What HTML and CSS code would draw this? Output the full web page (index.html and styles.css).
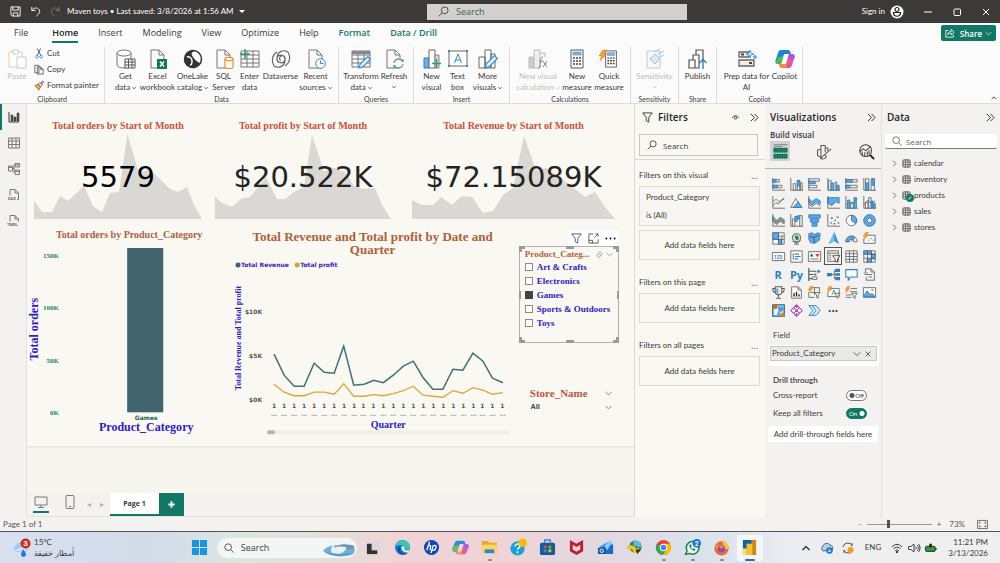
FILE: index.html
```html
<!DOCTYPE html>
<html lang="en">
<head>
<meta charset="utf-8">
<title>Maven toys</title>
<link rel="stylesheet" href="styles.css">
</head>
<body>
<svg class="defs" aria-hidden="true">
  <symbol id="doc" viewBox="0 0 20 20"><path d="M3 1h8l5 5v13H3zM11 1v5h5" fill="#fafafa" stroke="#777" /></symbol>
  <symbol id="chev" viewBox="0 0 10 10"><path d="M1 3l4 4 4-4" fill="none" stroke="currentColor"/></symbol>
  <symbol id="chevb" viewBox="0 0 10 10"><path d="M1 3l4 4 4-4" fill="none" stroke="currentColor" stroke-width="2"/></symbol>
  <symbol id="chevs" viewBox="0 0 10 10"><path d="M1 1l4 4-4 4M5 1l4 4-4 4" fill="none" stroke="currentColor" stroke-width="1.1"/></symbol>
  <symbol id="mag" viewBox="0 0 12 12"><circle cx="7.3" cy="4.7" r="3.7" fill="none" stroke="currentColor"/><path d="M4.7 7.3L.7 11.3" stroke="currentColor"/></symbol>
  <symbol id="mag2" viewBox="0 0 12 12"><circle cx="5" cy="5" r="4" fill="none" stroke="currentColor"/><path d="M8 8l3.5 3.5" stroke="currentColor"/></symbol>
  <symbol id="funnel" viewBox="0 0 12 12"><path d="M.8 1h10.4L7.4 5.8V11L4.6 9.5V5.800z" fill="none" stroke="currentColor"/></symbol>
  <symbol id="calc" viewBox="0 0 20 20"><path d="M4 1h12v18H4z" fill="#fff" stroke="#555"/><path d="M6 3h8v3H6z" fill="#7db9e8" stroke="#3a86c8" stroke-width=".6"/><path d="M6 9h2M9 9h2M12 9h2M6 12h2M9 12h2M12 12h2M6 15h2M9 15h2M12 15h2" stroke="#444" stroke-width="1.6"/></symbol>
  <symbol id="grid" viewBox="0 0 20 20"><path d="M1 2h18v16H1zM1 6h18M1 10h18M1 14h18M7 2v16M13 2v16" fill="none" stroke="#777"/></symbol>
  <symbol id="bars3" viewBox="0 0 20 20"><path d="M2 9h5v10H2z" fill="#6bb1ea" stroke="#2b7cc0"/><path d="M7 1h6v18H7z" fill="#fff" stroke="#666"/><path d="M13 6h4v13h-4z" fill="#d5d5d5" stroke="#888"/></symbol>
  <symbol id="pencil" viewBox="0 0 12 12"><path d="M1 11l1-3.500 7-7 2.500 2.500-7 7z" fill="#e2f2fd" stroke="#2d8bd0"/></symbol>
  <symbol id="bolt" viewBox="0 0 10 12"><path d="M4 0h5L6 4.500h2.500L1 12l2-5.500H0z" fill="#f5a13a" stroke="#c9701a" stroke-width=".5"/></symbol>
  <symbol id="tbl" viewBox="0 0 10 10"><rect x="1" y="1" width="8" height="8" rx="1" fill="none" stroke="#444"/><path d="M1 3.500h8M1 6.300h8M3.800 1v8M6.500 1v8" stroke="#444" stroke-width=".8"/></symbol>
</svg>

<header class="titlebar">
  <div class="quick">
    <button aria-label="Save"><svg viewBox="0 0 12 12"><path d="M1 1h10v10H2.500L1 9.500zM3 1v3.500h6V1M3.500 11V7.500h5V11" class="w"/></svg></button>
    <button aria-label="Undo"><svg viewBox="0 0 12 12"><path d="M2 1v4h4M2 5c2-3 5-3.500 7-2s2 4 0 6l-2 2" class="w"/></svg></button>
    <button aria-label="Redo" class="dim"><svg viewBox="0 0 12 12"><path d="M10 1v4H6M10 5C8 2 5 1.500 3 3s-2 4 0 6l2 2" class="w"/></svg></button>
    <button class="doc-name">Maven toys • Last saved: 3/8/2026 at 1:56 AM <span class="caret"></span></button>
  </div>
  <label class="top-search"><svg><use href="#mag"/></svg><input type="text" placeholder="Search" aria-label="Search"></label>
  <div class="window-tools">
    <button>Sign in</button>
    <svg class="avatar" viewBox="0 0 14 14"><circle cx="7" cy="7" r="6.500" fill="#fff"/><circle cx="7" cy="4.500" r="2" fill="none" stroke="#222" stroke-width="1.200"/><path d="M3.500 7.500h7c0 5-7 5-7 0z" fill="none" stroke="#222" stroke-width="1.200"/></svg>
    <button aria-label="Minimize"><svg viewBox="0 0 10 10"><path d="M1 5h8" class="w"/></svg></button>
    <button aria-label="Maximize"><svg viewBox="0 0 10 10"><rect x="2" y="2" width="6.500" height="6.500" rx="1" class="w"/></svg></button>
    <button aria-label="Close"><svg viewBox="0 0 10 10"><path d="M2 2l6 6M8 2L2 8" class="w"/></svg></button>
  </div>
</header>

<nav class="tabs">
  <button>File</button><button class="on">Home</button><button>Insert</button><button>Modeling</button><button>View</button><button>Optimize</button><button>Help</button><button class="ctx">Format</button><button class="ctx">Data / Drill</button>
  <button class="share"><svg viewBox="0 0 12 12"><path d="M4 3H1v8h9V8M3.500 8c0-3 2-4 4-4V1.500L11 5 7.500 8.500V6.200C6 6 4.500 6.500 3.500 8z" class="w"/></svg>Share<svg class="sm"><use href="#chev"/></svg></button>
</nav>

<section class="ribbon">
  <div class="group g-clip"><div class="items">
    <button class="item w34 off"><svg viewBox="0 0 20 20"><path d="M2 3h13v15H2z" fill="#fff" stroke="#eacb95"/><path d="M6 1h5v4H6z" fill="#fff" stroke="#c9c9c9"/><path d="M10 8h9v11h-9z" fill="#fff" stroke="#c9c9c9"/></svg>Paste</button>
    <div class="stack">
      <button><svg viewBox="0 0 12 12"><path d="M4 0l4 8M8 0L4 8" stroke="#444" fill="none"/><circle cx="3.500" cy="9.800" r="1.600" fill="none" stroke="#2d8bd0"/><circle cx="8.500" cy="9.800" r="1.600" fill="none" stroke="#2d8bd0"/></svg>Cut</button>
      <button><svg viewBox="0 0 12 12"><path d="M1 1h5v9H1zM4 3h4l3 3v5.500H4zM8 3v3h3" fill="#fff" stroke="#555"/></svg>Copy</button>
      <button><svg viewBox="0 0 12 12"><path d="M1 6l4-1.500 3 3L6 11.500z" fill="#f3a64f" stroke="#b76a1f"/><path d="M5 4.500l2-2 3 3-2 2zM8 3.500L10.500.5l1 1L9.500 4.500" fill="#fff" stroke="#444"/></svg>Format painter</button>
    </div></div><h2>Clipboard</h2></div>
  <div class="group g-data"><div class="items">
    <button class="item w30"><svg viewBox="0 0 20 20"><path d="M1 4v12c0 4 14 4 14 0V4" fill="#fafafa" stroke="#777"/><ellipse cx="8" cy="4" rx="7" ry="3" fill="#fff" stroke="#777"/><path d="M9 10h10v9H9zM9 13h10M9 16h10M12.500 10v9M16 10v9" fill="#fff" stroke="#555"/></svg>Get<span>data<svg><use href="#chevb"/></svg></span></button>
    <button class="item w34"><svg viewBox="0 0 20 20"><use href="#doc"/><rect x="9" y="10" width="10" height="10" fill="#107c41"/><path d="M12 12.500l4 5M16 12.500l-4 5" stroke="#fff" stroke-width="1.400"/></svg>Excel<span>workbook</span></button>
    <button class="item w36"><svg viewBox="0 0 20 20"><circle cx="10" cy="10" r="8.500" fill="#fff" stroke="#333" stroke-width="1.500"/><path d="M2 7c2-5 7-6 10-5-4 1-4 3-2 6s4 5 7 6c-2 4-7 5-10 4C2 17 1 12 2 7z" fill="#333"/><path d="M4 8c2-1 5 1 5 4s-1 4-2 4" fill="none" stroke="#fff" stroke-width="1.500"/></svg>OneLake<span>catalog<svg><use href="#chevb"/></svg></span></button>
    <button class="item w26"><svg viewBox="0 0 20 20"><use href="#doc"/><path d="M11 10v8c0 2 8 2 8 0v-8" fill="#fff" stroke="#f08c24" stroke-width="1.200"/><ellipse cx="15" cy="10" rx="4" ry="1.600" fill="#fff" stroke="#f08c24" stroke-width="1.200"/></svg>SQL<span>Server</span></button>
    <button class="item w26"><svg viewBox="0 0 20 20"><use href="#grid"/><path d="M0 5h10M5 0v10" stroke="#2f9a68" stroke-width="1.500"/></svg>Enter<span>data</span></button>
    <button class="item w36"><svg viewBox="0 0 20 20"><path d="M17 3C12 0 6 3 6 9s7 6 8 2-2-5-4-4-2 4 0 4M3 17c5 3 11 0 11-6s-7-6-8-2 2 5 4 4M6 3c-5 3-6 9-3 14M14 17c5-3 6-9 3-14" fill="none" stroke="#666" stroke-width="1.200"/></svg>Dataverse</button>
    <button class="item w34"><svg viewBox="0 0 20 20"><use href="#doc"/><circle cx="14.500" cy="14.500" r="4.800" fill="#fff" stroke="#2d8bd0"/><path d="M14.500 11.500v3h3" stroke="#2d8bd0" fill="none"/></svg>Recent<span>sources<svg><use href="#chevb"/></svg></span></button>
    </div><h2>Data</h2></div>
  <div class="group g-query"><div class="items">
    <button class="item w36"><svg viewBox="0 0 20 20"><use href="#grid"/><path d="M1 2h18v3H1z" fill="#888"/><use href="#pencil" x="7" y="7" width="13" height="13"/></svg>Transform<span>data<svg><use href="#chevb"/></svg></span></button>
    <button class="item w30"><svg viewBox="0 0 20 20"><use href="#doc"/><circle cx="14.500" cy="14.500" r="5" fill="#fafafa"/><path d="M10 14c1-5 7-5 9-1V10M19 15c-1 5-7 5-9 1v3" fill="none" stroke="#4f9f7c" stroke-width="1.200"/></svg>Refresh<span><svg><use href="#chevb"/></svg></span></button>
    </div><h2>Queries</h2></div>
  <div class="group g-insert"><div class="items">
    <button class="item w26"><svg viewBox="0 0 20 20"><use href="#bars3"/><path d="M10 14.500h9M14.500 10v9" stroke="#2f9a68" stroke-width="1.300"/></svg>New<span>visual</span></button>
    <button class="item w26"><svg viewBox="0 0 20 20"><path d="M1 2h18v15H1z" fill="#fff" stroke="#666"/><path d="M0 1h2v2H0zM18 1h2v2h-2zM0 16h2v2H0zM18 16h2v2h-2z" fill="#2d8bd0"/><path d="M6.500 14L10 5l3.500 9M7.500 11h5" fill="none" stroke="#2d8bd0"/></svg>Text<span>box</span></button>
    <button class="item w34"><svg viewBox="0 0 20 20"><path d="M1 8h6v11H1zM7 1h6v18H7zM13 5h4v14h-4z" fill="#fff" stroke="#666"/><use href="#pencil" x="6" y="6" width="14" height="14"/></svg>More<span>visuals<svg><use href="#chevb"/></svg></span></button>
    </div><h2>Insert</h2></div>
  <div class="group g-calc"><div class="items">
    <button class="item w44 off"><svg viewBox="0 0 20 20"><path d="M1 8h5v11H1z" fill="#ccc" stroke="#bbb"/><path d="M6 1h6v18H6zM12 4h5v4" fill="#eee" stroke="#bbb"/><path d="M15 8c-3-1-2 5-3 9 0 2-1 2-2 2M11 12h4M15 12l4 6M19 12l-4 6" fill="none" stroke="#888"/></svg>New visual<span>calculation<svg><use href="#chevb"/></svg></span></button>
    <button class="item w34"><svg><use href="#calc"/></svg>New<span>measure</span></button>
    <button class="item w30"><svg viewBox="0 0 20 20"><use href="#calc" x="3" width="18" height="20"/><use href="#bolt" width="9" height="13"/></svg>Quick<span>measure</span></button>
    </div><h2>Calculations</h2></div>
  <div class="group g-sens"><div class="items">
    <button class="item w36 off"><svg viewBox="0 0 20 20"><path d="M2 2h13v17H2z" fill="#f6f8fa" stroke="#bccbd6"/><path d="M5 10l5-5 5 5-5 5zM9 3l6-3M13 5l6-3M15 8l4-2" fill="#d8eaf6" stroke="#9bc7e6"/></svg>Sensitivity<span><svg><use href="#chevb"/></svg></span></button>
    </div><h2>Sensitivity</h2></div>
  <div class="group g-share"><div class="items">
    <button class="item w36"><svg viewBox="0 0 20 20"><path d="M1 11h6v8H1zM5 11V6h6v13H7M8 6V1h7v11" fill="none" stroke="#555" stroke-width="1.200"/><path d="M15 20v-9M11.500 14l3.500-3.500 3.500 3.500" fill="none" stroke="#2d7fc0" stroke-width="1.400"/></svg>Publish</button>
    </div><h2>Share</h2></div>
  <div class="group g-cop"><div class="items">
    <button class="item w50"><svg viewBox="0 0 20 20"><path d="M2 3h10v5H2zM2 11h15v6H2z" fill="#eee" stroke="#666" stroke-width="1.300"/><path d="M4 5.500h3M12 14h3" stroke="#444" stroke-width="2"/><path d="M13 1l1 3 3 1-3 1-1 3-1-3-3-1 3-1zM18 6l.5 1.500L20 8l-1.500.5L18 10l-.5-1.500L16 8l1.500-.5z" fill="#d6ecfb" stroke="#2d8bd0" stroke-width=".8"/></svg>Prep data for<span>AI</span></button>
    <button class="item w26"><svg viewBox="0 0 20 20"><path d="M6 1h7c2 0 2 1 3 4H9L6 15H3c-3 0-3-3-2-5l2-6c.6-2 1.500-3 3-3z" fill="#1b84d8"/><path d="M3 8l5-1-2 8H3c-3 0-2-4 0-7z" fill="#56b848"/><path d="M14 19H7c-2 0-2-1-3-4h7l3-10h3c3 0 3 3 2 5l-2 6c-.6 2-1.500 3-3 3z" fill="#e255a6"/><path d="M5 15h6l2-5-2 9H7c-1.500 0-2-2-2-4z" fill="#f58b3c"/><path d="M14 5h3c3 0 3 3 2 5h-6z" fill="#a35ae0"/></svg>Copilot</button>
    </div><h2>Copilot</h2></div>
  <button class="collapse" aria-label="Collapse ribbon"><svg viewBox="0 0 10 10"><path d="M1 7l4-4 4 4" fill="none" stroke="#333" stroke-width="1.500"/></svg></button>
</section>

<main class="work">
  <nav class="rail">
    <button class="on" aria-label="Report view"><svg viewBox="0 0 12 12"><path d="M1 1v10h10" stroke="#333" fill="none"/><path d="M3 4h2v6H3zM6 6h2v4H6zM9 2h2v8H9z" fill="#555" stroke="#222" stroke-width=".5"/></svg></button>
    <button aria-label="Table view"><svg viewBox="0 0 12 12"><path d="M.5 1h11v10H.5zM.5 4h11M.5 7.500h11M4 1v10M8 1v10" class="k"/></svg></button>
    <button aria-label="Model view"><svg viewBox="0 0 12 12"><path d="M.5 3h4v5h-4zM7 .5h4.500v3.500H7zM7 7h4.500v4.500H7zM.5 4.500h4M7 2h4.500M7 8.500h4.500M4.500 5.500H6V2h1M6 5.500v4h1" class="k"/></svg></button>
    <button aria-label="DAX query view"><svg viewBox="0 0 12 12"><path d="M2 6.500V.5h5l3.500 3.500v6.500H9M7 .5V4h3.500" class="k"/><text x="0" y="11" class="tiny">DAX</text></svg></button>
    <button aria-label="TMDL view"><svg viewBox="0 0 12 12"><path d="M2 6.500V.5h5l3.500 3.500v2.500M7 .5V4h3.500" class="k"/><text x="-1" y="11" class="tiny">TMDL</text></svg></button>
  </nav>

  <div class="canvas">
    <div class="page">
      <div class="kpis">
        <article class="kpi kpi-orders"><h3>Total orders by Start of Month</h3><div class="spark">
          <svg viewBox="0 0 168 85" preserveAspectRatio="none"><path d="M0 67L8 78H18L26 62 34 67 50 52 59 72 68 78 76 59 85 58 93.500 0 105 40 114 35 123 42 136 55 144 58 153 53 160 71 168 85H0z"/></svg><strong class="solid">5579</strong></div></article>
        <article class="kpi kpi-profit"><h3>Total profit by Start of Month</h3><div class="spark">
          <svg viewBox="0 0 176 85" preserveAspectRatio="none"><path d="M0 63L7 69 17 73 27 64 35 63 51 43 62 65 70 65 79 58 89 53 97 1 109 38 116 33 130 38 139 52 148 55 160 54 167 71 176 85H0z"/></svg><strong>$20.522K</strong></div></article>
        <article class="kpi"><h3>Total Revenue by Start of Month</h3><div class="spark">
          <svg viewBox="0 0 203 85" preserveAspectRatio="none"><path d="M0 66L10 71H21L29 63 40 71 50 62 60 63 71 79 81 77 91 61 101 54 112 2 124 36 134 34 153 47 173 63 183 58 193 73 203 85H0z"/></svg><strong>$72.15089K</strong></div></article>
      </div>
      <div class="lower">
        <article class="bar-card"><h3>Total orders by Product_Category</h3>
          <svg viewBox="27 241 195 196" role="img" aria-label="Total orders by category">
            <rect x="127" y="248" width="36" height="164" fill="#42656d"/>
            <g class="ytick"><text x="59" y="258">150K</text><text x="59" y="310">100K</text><text x="59" y="363">50K</text><text x="59" y="415">0K</text></g>
            <text x="146" y="420" class="cat">Games</text>
            <text x="146" y="431" class="axis">Product_Category</text>
            <text transform="translate(38 329) rotate(-90)" class="axis">Total orders</text>
          </svg></article>
        <article class="line-card"><h3>Total Revenue and Total profit by Date and Quarter</h3>
          <svg viewBox="222 256 296 182" role="img" aria-label="Revenue and profit by quarter">
            <circle cx="238" cy="265" r="2.500" fill="#3c6562"/><text x="241" y="267" class="leg">Total Revenue</text>
            <circle cx="297" cy="265" r="2.500" fill="#cfa63a"/><text x="300" y="267" class="leg">Total profit</text>
            <g class="money"><text x="262" y="314">$10K</text><text x="262" y="358">$5K</text><text x="262" y="402">$0K</text></g>
            <text transform="translate(241 338) rotate(-90)" class="axis2">Total Revenue and Total profit</text>
            <path class="rev" d="M274 354L284 375 294 386H304L314 363 324 372 334 373 343.500 346 353.500 385 364 384 373.500 380 383 382.500 393 375 403 366 413 361 422.500 377 432.500 389H442.500L452.500 369 462.500 370 472.500 353 482.500 361 492 378 502.500 382.500"/>
            <path class="prof" d="M274 384L284 392 294 395.500H304L314 392H324L334 394 343.500 383.500 353.500 396H364L373.500 394.500 383 395.500 393 393.500 403 390.500 413 386 422.500 395 432.500 396 442.500 397 452.500 390.500 462.500 393 472.500 387.500 482.500 390 492 394 502.500 392.500"/>
            <text class="ones" y="408" x="274 284 294 304 314 324 334 344 354 363 373 383 393 403 413 423 433 443 453 463 473 482 492 502">111111111111111111111111</text>
            <text class="ones dots" y="416" x="274 284 294 304 314 324 334 344 354 363 373 383 393 403 413 423 433 443 453 463 473 482 492 502">………………………………………………………………</text>
            <text x="388" y="428" class="quarter">Quarter</text>
            <rect x="267" y="430" width="242" height="4" rx="2" fill="#f0efeb"/><rect x="267" y="430" width="8" height="4" rx="2" fill="#b5b4b1"/>
          </svg></article>
        <aside class="slicers">
          <div class="vis-tools">
            <button aria-label="Filters"><svg><use href="#funnel"/></svg></button><button aria-label="Focus mode"><svg viewBox="0 0 12 12"><path d="M6 1H1v10h10V7M8 1h3v3M11 1L7 5M1 8h4v3" class="k dark"/></svg></button><button aria-label="More options"><svg viewBox="0 0 12 12"><circle cx="1.500" cy="6" r="1"/><circle cx="6" cy="6" r="1"/><circle cx="10.500" cy="6" r="1"/></svg></button>
          </div>
          <fieldset class="slicer">
            <i class="h tl"></i><i class="h tc"></i><i class="h tr"></i><i class="h ml"></i><i class="h mr"></i><i class="h bl"></i><i class="h bc"></i><i class="h br"></i>
            <div class="slicer-head"><b>Product_Categ...</b><svg viewBox="0 0 10 10"><path d="M1 6l4-5 4 3-4 5H3zM3 3.500l4 3" fill="none" stroke="#777" stroke-width=".8"/></svg><svg><use href="#chev"/></svg></div>
            <label><input type="checkbox">Art &amp; Crafts</label>
            <label><input type="checkbox">Electronics</label>
            <label><input type="checkbox" checked>Games</label>
            <label><input type="checkbox">Sports &amp; Outdoors</label>
            <label><input type="checkbox">Toys</label>
          </fieldset>
          <div class="store"><div><b>Store_Name</b><svg><use href="#chev"/></svg></div><button>All<svg><use href="#chev"/></svg></button></div>
        </aside>
      </div>
    </div>
    <div class="page-tabs">
      <button class="dev on" aria-label="Desktop layout"><svg viewBox="0 0 14 14"><path d="M1 2h12v8H1zM7 10v2M4 12.500h6" class="k"/></svg></button>
      <button class="dev" aria-label="Mobile layout"><svg viewBox="0 0 14 14"><rect x="3" y=".5" width="8" height="13" rx="1" class="k"/><path d="M6 11.500h2" class="k"/></svg></button>
      <button class="arr" aria-label="Previous page">◂</button><button class="arr" aria-label="Next page">▸</button>
      <button class="pg">Page 1</button><button class="add" aria-label="New page"><svg viewBox="0 0 10 10"><path d="M5 1.500v7M1.500 5h7" stroke="#fff" stroke-width="2"/></svg></button>
    </div>
  </div>

  <aside class="filters">
    <header><svg><use href="#funnel"/></svg><h2>Filters</h2><svg viewBox="0 0 12 12"><path d="M1.500 6.500c2-4 7-4 9 0" fill="none" stroke="#444" stroke-width="1.200"/><circle cx="6" cy="6.500" r="1.700" fill="none" stroke="#444" stroke-width="1.200"/></svg><svg><use href="#chevs"/></svg></header>
    <label class="find"><svg><use href="#mag"/></svg><input type="text" placeholder="Search" aria-label="Search filters"></label>
    <section class="first"><h3>Filters on this visual<button aria-label="More">...</button></h3>
      <div class="fcard"><span>Product_Category</span><span>is (All)</span></div><div class="drop">Add data fields here</div></section>
    <section><h3>Filters on this page<button aria-label="More">...</button></h3><div class="drop">Add data fields here</div></section>
    <section><h3>Filters on all pages<button aria-label="More">...</button></h3><div class="drop">Add data fields here</div></section>
  </aside>

  <aside class="viz">
    <header><h2>Visualizations</h2><svg><use href="#chevs"/></svg></header>
    <h3>Build visual</h3>
    <div class="modes">
      <button class="on" aria-label="Build visual"><svg viewBox="0 0 20 20"><path d="M2 2h16M2 4h10" stroke="#777"/><path d="M2 6h16v5H2zM2 13h16v5H2z" fill="#118060" stroke="#0b5a42" stroke-dasharray="1 1"/></svg></button>
      <button aria-label="Format visual"><svg viewBox="0 0 20 20"><path d="M3 8h4v8M7 9V3h5v8M12 6h3v3M3 8v7l5 2M19 7l-8 7M11 14c-3 0-1 4-5 4 4 2 8 0 7-3z" fill="none" stroke="#555" stroke-width="1.200"/></svg></button>
      <button aria-label="Analytics"><svg viewBox="0 0 20 20"><circle cx="9" cy="9" r="7" fill="none" stroke="#444" stroke-width="1.200"/><path d="M2 10l4-3 3 2 6-5M5 10v4M8 11v5M11 10v5M13 8v5" fill="none" stroke="#444" stroke-width="1.200"/><path d="M14 14l5 5" stroke="#222" stroke-width="2.400"/></svg></button>
    </div>
    <div class="gallery">
      <button aria-label="Stacked bar"><svg viewBox="0 0 16 16"><path d="M1 0v15h15" class="g"/><path d="M1 2h8v3H1zM1 9h11v3H1z" class="s"/><path d="M1 2h4v3H1zM1 9h6v3H1z" class="b"/></svg></button>
      <button aria-label="Stacked column"><svg viewBox="0 0 16 16"><path d="M1 0v15h15" class="g"/><path d="M4 7h3v8H4zM9 3h3v12H9zM13 6h2v9h-2z" class="s"/><path d="M9 3h3v7H9z" class="b"/></svg></button>
      <button aria-label="Clustered bar"><svg viewBox="0 0 16 16"><path d="M1 0v15h15" class="g"/><path d="M1 1h13v3H1zM1 9h10v3H1z" class="s"/><path d="M1 4h8v3H1z" class="b"/></svg></button>
      <button aria-label="Clustered column"><svg viewBox="0 0 16 16"><path d="M1 0v15h15" class="g"/><path d="M2 3h3v12H2zM10 5h2v10h-2z" class="s"/><path d="M5 6h3v9H5zM12 9h3v6h-3z" class="b"/></svg></button>
      <button aria-label="100% bar"><svg viewBox="0 0 16 16"><path d="M1 0v15h15" class="g"/><path d="M1 2h14v3H1zM1 9h14v3H1z" class="s"/><path d="M1 2h8v3H1zM1 9h5v3H1z" class="b"/></svg></button>
      <button aria-label="100% column"><svg viewBox="0 0 16 16"><path d="M1 0v15h15" class="g"/><path d="M3 1h4v14H3zM10 1h4v14h-4z" class="s"/><path d="M4 6h3v9H4zM11 1h3v8h-3z" class="b"/></svg></button>
      <button aria-label="Line"><svg viewBox="0 0 16 16"><path d="M1 0v15h15M1 12l4-4 3 2 4-5 3-1" class="g"/><path d="M1 7l4-3 4 3 6-5" fill="none" stroke="#368c74"/></svg></button>
      <button aria-label="Area"><svg viewBox="0 0 16 16"><path d="M1 14L7 3l6 11z" class="s"/><path d="M4 14l6-7 5 7z" class="b"/></svg></button>
      <button aria-label="Stacked area"><svg viewBox="0 0 16 16"><path d="M1 3l4 4 5-4 5 3v4l-5-3-5 4-4-3z" class="b"/><path d="M1 0v15h15M1 10l4 3 5-4 5 3" class="g"/></svg></button>
      <button aria-label="100% area"><svg viewBox="0 0 16 16"><path d="M1 2h14v7l-4-2-5 5-5-3z" class="b"/><path d="M1 0v15h15" class="g"/></svg></button>
      <button aria-label="Line and stacked column"><svg viewBox="0 0 16 16"><path d="M1 0v15h15" class="g"/><path d="M3 5h3v10H3zM11 2h3v13h-3z" class="b"/><path d="M7 8h3v7H7z" class="s"/><path d="M1 11l5-3 4 2 5-7" fill="none" stroke="#368c74"/></svg></button>
      <button aria-label="Line and clustered column"><svg viewBox="0 0 16 16"><path d="M1 0v15h15" class="g"/><path d="M3 8h3v7H3zM7 2h3v13H7z" class="s"/><path d="M10 6h2v9h-2zM13 9h2v6h-2z" class="b"/><path d="M1 11l5-6 4 4 5-3" class="g"/></svg></button>
      <button aria-label="Ribbon"><svg viewBox="0 0 16 16"><path d="M1 3l5 5 4-4 5 3v5l-5-3-4 4-5-4z" class="b"/><path d="M1 0v15h15" class="g"/><path d="M1 7l5 3 4-3 5 4" fill="none" stroke="#d17a22" stroke-width="1.800"/></svg></button>
      <button aria-label="Waterfall"><svg viewBox="0 0 16 16"><path d="M1 0v15h15" class="g"/><path d="M3 6h3v9H3zM12 2h3v13h-3z" class="s"/><path d="M6 3h3v6H6zM9 2h3v4H9z" class="b"/></svg></button>
      <button aria-label="Funnel"><svg viewBox="0 0 16 16"><path d="M1 1h14v4H1zM3 6h10v4H3zM5 11h6v4H5z" class="b"/></svg></button>
      <button aria-label="Scatter"><svg viewBox="0 0 16 16"><path d="M1 0v15h15" class="g"/><path d="M4 10h2v2H4zM9 7h2v2H9zM13 10h2v2h-2z" fill="#3489cf"/><path d="M5 4h2v2H5zM12 3h2v2h-2zM8 11h2v2H8z" fill="#666"/></svg></button>
      <button aria-label="Pie"><svg viewBox="0 0 16 16"><circle cx="8" cy="8" r="6.500" class="s"/><path d="M8 1.500A6.500 6.500 0 0113 12L8 8z" class="b"/></svg></button>
      <button aria-label="Donut"><svg viewBox="0 0 16 16"><circle cx="8" cy="8" r="5.300" fill="none" stroke="#58a9e6" stroke-width="4"/><circle cx="8" cy="8" r="7.200" fill="none" stroke="#2b78b8"/><circle cx="8" cy="8" r="3" fill="#fff" stroke="#345"/></svg></button>
      <button aria-label="Treemap"><svg viewBox="0 0 16 16"><path d="M1 1h14v14H1z" class="s"/><path d="M1 1h7v8H1zM8 9h4v6H8z" class="b"/><path d="M1 9h14M8 1v14M12 5v10M8 5h7" class="g"/></svg></button>
      <button aria-label="Map"><svg viewBox="0 0 16 16"><circle cx="8" cy="7" r="5" fill="#cfe3dc" stroke="#444"/><path d="M6 4l4 1 1 4-3 1-2-3z" fill="#2f7f62"/><path d="M3 11c2 3 8 3 10-1M8 12v3M5 15h6" class="g"/></svg></button>
      <button aria-label="Filled map"><svg viewBox="0 0 16 16"><path d="M1 2l4-1 3 2 4-2 3 1-1 8-6 4-5-1-2-4z" class="b"/><path d="M2 5l5 2 6-3M7 7l1 6" stroke="#444" fill="none"/></svg></button>
      <button aria-label="Azure map"><svg viewBox="0 0 16 16"><path d="M9 0l6 15-6-4-7 4z" fill="#3493dd"/><path d="M9 0v11l-7 4z" fill="#71bcf3"/></svg></button>
      <button aria-label="Gauge"><svg viewBox="0 0 16 16"><path d="M1 12a7 7 0 0114 0h-4a3 3 0 00-6 0z" class="s"/><path d="M1 12a7 7 0 0111-5.700L10 9.500A3 3 0 005 12z" class="b"/><path d="M8 12l3-5" class="g"/></svg></button>
      <button aria-label="Card new"><svg viewBox="0 0 16 16"><path d="M4 4h11v10H1V8" class="s"/><path d="M6 10h2M9 8h2M12 10h2" stroke="#2f86ca"/><use href="#bolt" width="8" height="10"/></svg></button>
      <button aria-label="Card"><svg viewBox="0 0 16 16"><path d="M.5 3h15v10H.5z" class="s"/><text x="2" y="10.500" class="num">123</text></svg></button>
      <button aria-label="Multi-row card"><svg viewBox="0 0 16 16"><path d="M1 1h14v14H1z" class="s"/><path d="M4 4v8" stroke="#555"/><path d="M6 5h5M6 8h7M6 11h4" stroke="#2f86ca" stroke-width="1.500"/></svg></button>
      <button aria-label="KPI"><svg viewBox="0 0 16 16"><path d="M.5 2h15v12H.5z" class="s"/><path d="M2 8l2.500-4L7 8z" fill="#178466"/><path d="M9 5h5l-2.500 4z" fill="#d33"/><path d="M3 11h10" class="g"/></svg></button>
      <button class="sel" aria-label="Slicer"><svg viewBox="0 0 16 16"><path d="M1 1h13v13H1zM1 4h13M3 6.500h2M3 9h2M3 11.500h2" class="g"/><path d="M7 7h9l-3 4v4l-3-1v-3z" fill="#fff" stroke="#333"/></svg></button>
      <button aria-label="Table"><svg viewBox="0 0 16 16"><path d="M1 1h14v14H1zM1 4.500h14M1 8h14M1 11.500h14M5.500 1v14M10.500 1v14" class="s"/></svg></button>
      <button aria-label="Matrix"><svg viewBox="0 0 16 16"><path d="M1 1h14v14H1z" class="s"/><path d="M1 1h9v4H1zM10 5h5v6h-5zM5 11h5v4H5z" class="b"/><path d="M1 5h14M1 10h14M5.500 1v14M10.500 1v14" class="g"/></svg></button>
      <button aria-label="R visual" class="code">R</button>
      <button aria-label="Python visual" class="code">Py</button>
      <button aria-label="Key influencers"><svg viewBox="0 0 16 16"><path d="M1 0v16M1 4h9M1 8h6M1 13h9" class="g" stroke-width="1.500"/><circle cx="13" cy="4" r="2" fill="#3b92d8"/><circle cx="9" cy="8" r="1.500" fill="#777"/><path d="M5 11h6v3H5z" class="s"/></svg></button>
      <button aria-label="Decomposition tree"><svg viewBox="0 0 16 16"><path d="M6 8h3M9 8V3h2M9 8v5h2" class="g"/><path d="M0 6h6v4H0zM10 1h6v4h-6zM10 6.500h6v3h-6zM10 11h6v4h-6z" fill="#2f7fc0"/></svg></button>
      <button aria-label="Q&amp;A"><svg viewBox="0 0 16 16"><path d="M1 2h14v9H7l-3 4v-4H1z" fill="#fff" stroke="#2b7fc2" stroke-width="1.300"/></svg></button>
      <button aria-label="Narrative"><svg viewBox="0 0 16 16"><path d="M3 5V1h7l4 4v10H4v-4M10 1v4h4M2 8h9M7 11h4" class="g"/><path d="M1 6h5" stroke="#2b7fc2"/></svg></button>
      <button aria-label="Goals"><svg viewBox="0 0 16 16"><path d="M4 1h8v6c0 5-8 5-8 0zM4 3H1c0 4 1 5 3 5M12 3h3c0 4-1 5-3 5M8 11v3M5 15h6" class="g" stroke-width="1.300"/><path d="M5 3h3v7C6 10 5 9 5 7z" fill="#64b1ea"/></svg></button>
      <button aria-label="Paginated report"><svg viewBox="0 0 16 16"><path d="M2 1h8l4 4v10H2zM10 1v4h4" class="s"/><path d="M5 13V9M8 13V7M11 13v-3" stroke="#333" stroke-width="1.800"/></svg></button>
      <button aria-label="Button slicer"><svg viewBox="0 0 16 16"><path d="M5 2h9v5M1 8v6h7M8 2v9M3 8h6" class="g"/><path d="M8 8h7l-2.500 3v4l-2-1v-3z" class="s"/><use href="#bolt" width="7" height="9"/></svg></button>
      <button aria-label="Text slicer"><svg viewBox="0 0 16 16"><path d="M4 3h11v10H1V8" class="s"/><path d="M6 11l2.500-6 2.500 6" fill="none" stroke="#2b7fc2"/><path d="M9 9h7l-2.500 3v3l-2-1v-2z" class="s"/><use href="#bolt" width="7" height="9"/></svg></button>
      <button aria-label="List slicer"><svg viewBox="0 0 16 16"><path d="M7 3h8M6 7h9M1 11h7M1 14h7" class="g"/><path d="M8 9h7l-2.500 3v3l-2-1v-2z" class="s"/><use href="#bolt" width="7" height="9"/></svg></button>
      <button aria-label="Image"><svg viewBox="0 0 16 16"><path d="M.5 2h15v12H.5z" class="s"/><path d="M1 12l4-6 4 5 2-2 4 4H1z" class="b"/><circle cx="11.500" cy="5" r="1.300" fill="#d8871d"/></svg></button>
      <button aria-label="ArcGIS"><svg viewBox="0 0 16 16"><path d="M1 1h14v14H1z" fill="#e9f2f8" stroke="#245f8d" stroke-width="1.600"/><path d="M7 3h7v5l-4 2v4H6l2-6z" fill="#49a3e2"/><circle cx="4" cy="3.500" r="3" fill="#cf711c"/><circle cx="13" cy="13" r="2.500" fill="#d8871d"/></svg></button>
      <button aria-label="Power Apps"><svg viewBox="0 0 16 16"><path d="M8 1l7 7-7 7-7-7zM5 5l6 6M11 5l-6 6M8 1v4M8 11v4" fill="#fff" stroke="#a44ba3" stroke-width="1.300"/></svg></button>
      <button aria-label="Power Automate"><svg viewBox="0 0 16 16"><path d="M1 2h9l5 6-5 6H1l5-6zM5 2l5 6-5 6" fill="#dceefb" stroke="#2d8bd0" stroke-width="1.200"/></svg></button>
      <button aria-label="Get more visuals" class="more">···</button>
    </div>
    <h4>Field</h4>
    <div class="well"><div class="pill">Product_Category<svg><use href="#chev"/></svg><svg viewBox="0 0 10 10"><path d="M2 2l6 6M8 2L2 8" stroke="#444"/></svg></div></div>
    <h4 class="drill">Drill through</h4>
    <label class="toggle">Cross-report<input type="checkbox"><span>Off</span></label>
    <label class="toggle">Keep all filters<input type="checkbox" checked><span>On</span></label>
    <div class="well-add">Add drill-through fields here</div>
  </aside>

  <aside class="data">
    <header><h2>Data</h2><svg><use href="#chevs"/></svg></header>
    <label class="find2"><svg><use href="#mag2"/></svg><input type="text" placeholder="Search" aria-label="Search data"></label>
    <ul>
      <li><svg class="r"><use href="#chev"/></svg><svg><use href="#tbl"/></svg>calendar</li>
      <li><svg class="r"><use href="#chev"/></svg><svg><use href="#tbl"/></svg>inventory</li>
      <li class="used"><svg class="r"><use href="#chev"/></svg><svg><use href="#tbl"/></svg>products</li>
      <li><svg class="r"><use href="#chev"/></svg><svg><use href="#tbl"/></svg>sales</li>
      <li><svg class="r"><use href="#chev"/></svg><svg><use href="#tbl"/></svg>stores</li>
    </ul>
  </aside>
</main>

<footer class="status"><span>Page 1 of 1</span><div class="zoom"><span>-</span><input type="range" min="10" max="200" value="73" aria-label="Zoom"><span>+</span><output>73%</output><svg viewBox="0 0 12 10"><path d="M.5.5h11v9H.5z" fill="none" stroke="#666"/><path d="M2.500 4V2.500H4M8 2.500h1.500V4M9.500 6v1.500H8M4 7.500H2.500V6" fill="none" stroke="#555"/></svg></div></footer>

<div class="taskbar">
  <div class="weather"><svg viewBox="0 0 20 20"><path d="M4 14a4 4 0 010-7 5 5 0 019 0 4 4 0 011 7z" fill="#a9c9f2"/><path d="M2 13h12l-2-5z" fill="#d5e4f8"/><path d="M11 11c2 3 3 4 3 5.500a2.500 2.500 0 01-5 0c0-1.500 1-2.500 2-5.500z" fill="#2474e5"/><circle cx="13.500" cy="5.500" r="5" fill="#c42b1c"/><text x="13.500" y="8.200" class="badge">3</text></svg><div><span>15°C</span><span lang="ar" dir="rtl">أمطار خفيفة</span></div></div>
  <div class="apps">
    <button aria-label="Start"><svg viewBox="0 0 18 18"><path d="M1 1h7.500v7.500H1zM9.500 1H17v7.500H9.500zM1 9.500h7.500V17H1zM9.500 9.500H17V17H9.500z" fill="#1995e0"/></svg></button>
    <label class="task-search"><svg><use href="#mag2"/></svg><input type="text" placeholder="Search" aria-label="Search the taskbar"><svg class="swan" viewBox="0 0 34 18"><path d="M0 12c4-5 10-6 16-6h16c3 3 2 8-1 10-8 3-24 3-31-4z" fill="#6fb1d6"/><path d="M14 7c6-3 14-2 19 0l-1 3H16z" fill="#6d93ad"/><path d="M9 13c-2-4 4-8 1-10-2-1-3 1-5 1 0-3 6-4 7-1 1 2-1 4 0 6 4-3 9-1 13-1-1 4-4 7-9 7-4 0-6 0-7-2z" fill="#eceef4"/><path d="M2 13c8 4 20 4 29 1-6 4-22 5-29-1z" fill="#3b8bc4"/></svg></label>
    <button aria-label="Task view"><svg viewBox="0 0 18 18"><path d="M2 5h11v11H2z" fill="#333"/><path d="M7 3h10v9H7z" fill="#d9d9d9"/></svg></button>
    <button aria-label="Edge"><svg viewBox="0 0 18 18"><circle cx="9" cy="9" r="8" fill="#1b78cf"/><path d="M1 8C2-1 16-1 17 8c0 4-5 4-6 2 1-4-6-5-10-2z" fill="#3ec6a8"/><path d="M7 9c-2 4 2 8 8 6-6 4-13-1-11-7z" fill="#104f9f"/><path d="M8 8c3-1 3 1 3 3 2 2 5 1 6-1l-2 4c-4 1-8-2-7-6z" fill="#e8f3fb"/></svg></button>
    <button aria-label="HP"><svg viewBox="0 0 18 18"><circle cx="9" cy="9" r="8" fill="#0d46b5"/><path d="M7 3L4 12M5.500 7.500c3-2 3 0 2 4.500M11 6.500L8.500 15M11 7c4-1 3 1 2 4-.5 1-1 1-3 1" fill="none" stroke="#fff" stroke-width="1.400"/></svg></button>
    <button aria-label="Copilot"><svg viewBox="0 0 20 20"><path d="M6 2h7c2 0 2 1 3 4H9L6 15H3c-3 0-3-3-2-5l2-5c.6-2 1.500-3 3-3z" fill="#2b8bdc"/><path d="M3 8l5-1-2 8H3c-3 0-2-4 0-7z" fill="#7cb950"/><path d="M14 18H7c-2 0-2-1-3-3h7l3-9h3c3 0 3 3 2 5l-2 5c-.6 1.500-1.500 2-3 2z" fill="#df5aa3"/><path d="M5 15h6l2-5-2 8H7c-1.500 0-2-1-2-3z" fill="#f49a4b"/><path d="M14 6h3c3 0 3 3 2 5h-6z" fill="#a368dd"/></svg></button>
    <button class="run" aria-label="Explorer"><svg viewBox="0 0 18 18"><path d="M1 2h6l2 2h8v10H1z" fill="#e9ab27"/><path d="M1 6h16v9H1z" fill="#fcd462"/><path d="M4 11h10v4H4z" fill="#2f86d6"/></svg></button>
    <button aria-label="Support"><svg viewBox="0 0 18 18"><circle cx="8" cy="10" r="7.500" fill="#1aa0d8"/><path d="M5.500 8c0-4 6-3 5 0-.5 1.500-2.500 1.500-2.500 3.500M8 13v2" fill="none" stroke="#fff" stroke-width="1.600"/><circle cx="13.500" cy="4" r="4.500" fill="#ffb900"/></svg></button>
    <button aria-label="Store"><svg viewBox="0 0 18 18"><path d="M6 4V1h6v3" fill="none" stroke="#2c8ad1" stroke-width="1.500"/><rect x="1" y="4" width="16" height="13" rx="2" fill="#155a9c"/><path d="M5 7h3v3H5z" fill="#f25022"/><path d="M10 7h3v3h-3z" fill="#7fba00"/><path d="M5 11h3v3H5z" fill="#00a4ef"/><path d="M10 11h3v3h-3z" fill="#ffb900"/></svg></button>
    <button aria-label="McAfee"><svg viewBox="0 0 18 18"><path d="M2 1l7 4 7-4v12l-7 4-7-4zM5 6v5l4 2.500 4-2.500V6L9 8.500z" fill="#c01d2e" fill-rule="evenodd"/></svg></button>
    <button aria-label="Outlook"><svg viewBox="0 0 18 18"><path d="M3 8l10-6 4 4v10H4z" fill="#3c9be8"/><path d="M5 9l12-3v10H5z" fill="#1b6cc7"/><path d="M12 2l4 1-5 9-3-4z" fill="#8ccaf8"/><rect x="1" y="9" width="8" height="7" rx="1" fill="#0f57b0"/><circle cx="5" cy="12.500" r="1.800" fill="none" stroke="#fff"/></svg></button>
    <button aria-label="Download manager"><svg viewBox="0 0 18 18"><circle cx="10" cy="8" r="6.500" fill="#27815a"/><path d="M8 2c4-2 9 2 8 7l-8-2z" fill="#6ab6df"/><path d="M1 7c5-1 8 0 10 3l3-1-1 7-7-2 2-1C7 11 4 10 1 11z" fill="#e9c62c"/><path d="M10 11l6 0-4 5z" fill="#333"/></svg></button>
    <button class="run" aria-label="Chrome"><svg viewBox="0 0 18 18"><circle cx="9" cy="9" r="8" fill="#ea4335"/><path d="M2 5a8 8 0 006 12l4-6-3-3H5z" fill="#34a853"/><path d="M8.500 17A8 8 0 0016 5H9l3 6z" fill="#fbbc05"/><circle cx="9" cy="9" r="4" fill="#fff"/><circle cx="9" cy="9" r="3" fill="#4285f4"/></svg></button>
    <button class="run" aria-label="WhatsApp"><svg viewBox="0 0 20 20"><path d="M2 18l1.500-4a7.500 7.500 0 113 3z" fill="#e9f5ef" stroke="#168257" stroke-width="1.800"/><path d="M6 8c1 3 3 5 6 6l1.500-2-2-1-1 1C9 11 8 10 8 9l1-1-1-2z" fill="#168257"/><circle cx="15" cy="5" r="5" fill="#1672d4"/><text x="15" y="7.800" class="badge">2</text></svg></button>
    <button class="run" aria-label="Firefox"><svg viewBox="0 0 18 18"><circle cx="9" cy="10" r="7.500" fill="#f4603a"/><path d="M11 0c1 3 6 5 5.500 10-4 3-8-3-5.500-10z" fill="#ffc530"/><path d="M2 5l4 2-2 5z" fill="#ff9a2e"/><circle cx="9" cy="10" r="3.800" fill="#7b4fd0"/><path d="M6 7c3-1 5 0 6 2l-4 1z" fill="#ff8a2a"/></svg></button>
    <button class="run act" aria-label="Power BI"><svg viewBox="0 0 18 18"><path d="M10 1h6v16h-6z" fill="#c98a15"/><path d="M6 5h6v12H6z" fill="#f2c52c"/><path d="M2 1h9v4H6v12H2z" fill="#155f9e"/><path d="M2 10h4v7H2z" fill="#f8de76"/></svg></button>
  </div>
  <div class="tray">
    <svg viewBox="0 0 12 12"><path d="M2.500 8L6 4.500 9.500 8" fill="none" stroke="#222" stroke-width="1.200"/></svg>
    <svg viewBox="0 0 12 12"><path d="M2 9a3 3 0 010-5 4 4 0 017-1 3 3 0 012 5z" fill="#b8cfdf" stroke="#567"/><circle cx="8.500" cy="8.500" r="3.300" fill="#1779cf"/><path d="M7 8h3M7 9.500h3" stroke="#fff" stroke-width=".7"/></svg>
    <svg viewBox="0 0 12 12"><path d="M1 5c1-5 8-5 9-1V1M11 8c-1 4-8 4-9 0v3" fill="none" stroke="#444"/><circle cx="8.500" cy="8" r="3" fill="#f39c1e"/></svg>
    <span class="lang">ENG</span>
    <svg viewBox="0 0 12 12"><path d="M1 5c3-3.500 7-3.500 10 0M2.500 7c2-2.500 5-2.500 7 0M4.200 8.800c1-1.300 2.600-1.300 3.600 0" fill="none" stroke="#333"/><circle cx="6" cy="10" r="1"/></svg>
    <svg viewBox="0 0 12 12"><path d="M.5 4.500H3l3-2.500v8L3 7.500H.5zM7.500 4.500c1 1 1 2 0 3M9 3c2 2 2 4 0 6M10.500 2c2 2.500 2 5.500 0 8" fill="none" stroke="#333" stroke-width=".9"/></svg>
    <svg class="batt" viewBox="0 0 14 12"><rect x=".5" y="4" width="11.500" height="6" rx="1.500" fill="#2f9e2f" stroke="#222"/><path d="M12.500 6h1v2h-1z"/><path d="M5 1h3v3L6.500 6 5 4z" fill="#222"/></svg>
    <div class="clock"><span>11:21 PM</span><span>3/13/2026</span></div>
  </div>
</div>
</body>
</html>
```

FILE: styles.css
```css
* { box-sizing: border-box; }
body {
  margin: 0; min-height: 100vh; display: flex; flex-direction: column;
  font: 8px/11px Lato, "Open Sans", sans-serif; color: #3b3a39; background: #f3f2f1; overflow-x: hidden;
}
button, input, select { font: inherit; color: inherit; border: 0; background: none; padding: 0; margin: 0; }
button { display: inline-flex; align-items: center; justify-content: center; white-space: nowrap; }
h2, h3, h4, ul, fieldset { margin: 0; padding: 0; border: 0; font-weight: 400; font-size: inherit; min-width: 0; }
svg { flex: none; width: 12px; height: 12px; overflow: visible; }
input { min-width: 0; outline: 0; }
input::placeholder { color: inherit; opacity: 1; }
.defs { position: absolute; width: 0; height: 0; }
.w { fill: none; stroke: #fff; }
.k { fill: none; stroke: #7a7978; }
.dark { stroke: #555; }

/* title bar */
.titlebar { display: flex; align-items: center; height: 23px; background: #3b3a39; color: #fff; font-family: "Open Sans", sans-serif; }
.quick { display: flex; align-items: center; gap: 9px; flex: 430; padding-left: 10px; }
.quick svg { width: 11px; height: 11px; }
.quick .dim { opacity: .35; }
.caret { border: 3px solid transparent; border-top-color: #fff; border-bottom: 0; margin-left: 5px; }
.doc-name { margin-left: -3px; font-family: Lato, sans-serif; }
.top-search { flex: 257; display: flex; align-items: center; gap: 7px; height: 16px; padding-left: 11px; background: #d2d0ce; color: #37635a; font-size: 9px; }
.top-search svg { width: 11px; height: 11px; color: #444; }
.window-tools { flex: 313; display: flex; align-items: center; justify-content: flex-end; padding-right: 9px; gap: 19px; font-family: Lato, sans-serif; }
.window-tools svg { width: 10px; height: 10px; }
.window-tools .avatar { width: 14px; height: 14px; margin-left: -14px; }

/* ribbon tabs */
.tabs { display: flex; align-items: stretch; height: 20px; padding: 0 4px 0 14px; gap: 20px; background: #fbfbfb; font: 9px "Open Sans", sans-serif; }
.tabs button { border-bottom: 2px solid transparent; }
.tabs button:first-child { margin-right: 4px; }
.tabs .on { font-weight: 600; color: #252423; border-color: #117865; }
.tabs .ctx { color: #117865; font-weight: 600; }
.tabs .share { margin: 2px 0 2px auto; padding: 0 4px; gap: 5px; border: 0; border-radius: 2px; background: #117865; color: #fff; font-size: 8px; font-weight: 600; }
.share svg { width: 10px; height: 10px; }
.share .sm { width: 7px; height: 7px; margin-left: -2px; }

/* ribbon */
.ribbon { display: flex; height: 61px; padding-top: 4px; background: #fbfbfb; border-bottom: 1px solid #dddcd8; }
.group { display: flex; flex-direction: column; justify-content: space-between; align-items: center; border-right: 1px solid #dcdbd9; }
.group h2 { font-size: 7px; line-height: 8px; }
.items { display: flex; align-items: flex-start; }
.item { flex-direction: column; padding-top: 2px; line-height: 11px; }
.item > svg { width: 20px; height: 20px; margin-bottom: 2px; }
.item span { display: flex; align-items: center; gap: 2px; min-height: 10px; }
.item span svg { width: 4px; height: 4px; }
.off { color: #bebbb8; }
.w26 { width: 26px; } .w30 { width: 30px; } .w34 { width: 34px; } .w36 { width: 36px; } .w44 { width: 44px; } .w50 { width: 50px; }
.g-clip { width: 105px; } .g-data { width: 234px; } .g-query { width: 75px; } .g-insert { width: 96px; }
.g-calc { width: 121px; } .g-sens { width: 48px; } .g-share { width: 38px; } .g-cop { width: 86px; }
.g-clip .items { align-self: flex-start; }
.stack { display: flex; flex-direction: column; align-items: flex-start; gap: 5px; padding-top: 1px; }
.stack button { gap: 3px; }
.stack svg { width: 10px; height: 11px; }
.collapse { margin: auto 3px 2px auto; }
.collapse svg { width: 6px; height: 6px; }

/* workspace */
.work { flex: 1; display: grid; grid-template-columns: 27px minmax(0, 608fr) minmax(0, 130fr) minmax(0, 117fr) minmax(0, 118fr); }
.rail { display: flex; flex-direction: column; background: #f3f2f1; border-right: 1px solid #e3e1de; }
.rail button { height: 26px; border-left: 2px solid transparent; }
.rail .on { border-color: #117865; }
.tiny { font: 700 4px Roboto, sans-serif; fill: #666; }
.canvas { display: flex; flex-direction: column; background: #f6f5ee; border-right: 1px solid #dbd9d5; }
.page { background: #f9f8f2; border-bottom: 2px solid #ecebe3; padding: 16px 19px 0 7px; height: 344px; }
.page h3, .axis, .axis2, .quarter, .slicers b, .slicer label, .ytick { font-family: "Liberation Serif", serif; font-weight: 700; }
.page h3 { text-align: center; color: #c9503f; font-size: 10px; line-height: 12px; }
.kpis { display: grid; grid-template-columns: 181fr 197fr 203fr; }
.kpi-orders { padding-right: 13px; }
.kpi-profit { padding-right: 21px; }
.spark { display: grid; margin-top: 2px; }
.spark > * { grid-area: 1 / 1; }
.spark svg { width: 100%; height: 85px; fill: #d9d8d4; }
.spark strong { place-self: center; padding-top: 1px; font: 29px/29px "DejaVu Sans", sans-serif; color: #252423; }
.spark .solid { color: #000; }
.page .lower { display: grid; grid-template-columns: 195fr 296fr 100fr; margin: 10px -16px 0 -7px; padding-right: 12px; }
.lower h3 { color: #b0603a; }
.lower svg text { text-anchor: middle; }
.bar-card svg { width: 100%; height: auto; }
.bar-card h3 { padding-left: 9px; }
.page .line-card h3 { font-size: 13px; line-height: 13px; padding: 1px 20px 0 24px; color: #b0603a; }
.page .bar-card h3 { color: #b0603a; }
.line-card > svg { width: 100%; height: auto; }
.lower .ytick text { font-size: 7px; text-anchor: end; fill: #268565; }
.cat { font: 700 6px "DejaVu Sans", sans-serif; fill: #23604e; }
.axis { font-size: 12px; fill: #2f1ac4; }
.axis2 { font-size: 8px; fill: #2f1ac4; }
.quarter { font-size: 10px; fill: #2f1ac4; }
.lower .leg { font: 700 6px "DejaVu Sans", sans-serif; text-anchor: start; fill: #3920b8; }
.lower .money text { font: 700 6px "DejaVu Sans", sans-serif; text-anchor: end; fill: #555; }
.ones { font: 700 6px "DejaVu Sans", sans-serif; fill: #555; }
.dots { fill: #999; }
.rev { fill: none; stroke: #42716e; stroke-width: 1.5; }
.prof { fill: none; stroke: #d9a83c; stroke-width: 1.3; }

.slicers { display: flex; flex-direction: column; }
.vis-tools { display: flex; align-self: flex-end; gap: 6px; padding: 2px 3px; background: #fff; margin-top: 2px; }
.vis-tools svg { width: 11px; height: 11px; color: #555; }
.slicer { position: relative; border: 1px solid #b3b2af; padding: 1px 5px 12px; }
.slicer-head { display: flex; align-items: center; gap: 3px; color: #b0603a; font-size: 9px; line-height: 12px; }
.slicer-head b { margin-right: auto; white-space: nowrap; }
.slicer-head svg { width: 7px; height: 7px; color: #777; }
.slicer label { display: flex; align-items: center; gap: 4px; color: #2f1ac4; font-size: 9px; line-height: 14px; white-space: nowrap; }
.slicer input { appearance: none; width: 8px; height: 8px; border: 1px solid #8b8a88; background: #fff; }
.slicer input:checked { background: #444; border-color: #444; }
.h { position: absolute; width: 6px; height: 6px; border: 0 solid #9b9a97; }
.tl { top: -1px; left: -1px; border-width: 3px 0 0 3px; } .tr { top: -1px; right: -1px; border-width: 3px 3px 0 0; }
.bl { bottom: -1px; left: -1px; border-width: 0 0 3px 3px; } .br { bottom: -1px; right: -1px; border-width: 0 3px 3px 0; }
.tc { top: -1px; left: 47%; border-top-width: 3px; width: 8px; } .bc { bottom: -1px; left: 47%; border-bottom-width: 3px; width: 8px; }
.ml { top: 46%; left: -1px; border-left-width: 2px; height: 8px; } .mr { top: 46%; right: -1px; border-right-width: 2px; height: 8px; }
.store { padding: 44px 7px 0 11px; color: #c0563a; font-size: 11px; line-height: 12px; }
.store div, .store button { display: flex; width: 100%; justify-content: space-between; align-items: center; }
.store button { font: 700 7px/16px "Open Sans", sans-serif; color: #444; padding-left: 1px; }
.store svg { width: 7px; height: 7px; color: #555; }

.page-tabs { margin-top: auto; display: flex; align-items: stretch; height: 24px; background: #f3f2f1; border-bottom: 1px solid #e5e4e1; }
.dev { width: 16px; margin: 0 6px 3px; border-bottom: 2px solid transparent; }
.dev + .dev { margin: 0 4px 3px 7px; }
.dev.on { border-color: #117865; }
.dev svg { width: 14px; height: 14px; }
.arr { width: 13px; color: #b5b3b0; }
.pg { width: 49px; margin-left: 2px; background: #fff; border-bottom: 2px solid #117865; font: 700 7px "Open Sans", sans-serif; }
.add { width: 25px; background: #117865; }
.add svg { width: 9px; height: 9px; }

/* panes */
.work header { display: flex; align-items: center; height: 26px; }
.work header h2 { font: 600 10px "Open Sans", sans-serif; color: #252423; margin-right: auto; }
.work header svg { width: 9px; height: 9px; color: #333; }
.filters { background: #f9f8f3; }
.filters header { padding: 0 6px 0 7px; gap: 10px; }
.filters header svg:first-child { width: 11px; height: 11px; margin-right: -5px; }
.filters .find { display: flex; align-items: center; gap: 6px; height: 22px; margin: 4px 7px 0 4px; padding-left: 7px; border: 1px solid #c8c6c4; font: 8px "Open Sans", sans-serif; }
.find svg { width: 10px; height: 10px; }
.filters section { padding: 0 5px 0 4px; margin-bottom: 16px; }
.filters .first { border-top: 1px solid #d9d7d3; margin-top: 3px; padding-top: 9px; }
.filters section h3 { display: flex; justify-content: space-between; line-height: 13px; padding-right: 2px; }
.filters section h3 button { color: #777; font-size: 10px; }
.fcard { display: flex; flex-direction: column; gap: 7px; height: 40px; margin-top: 4px; padding: 5px 6px; border: 1px solid #dddbd7; background: #f7f6f2; }
.drop { display: flex; align-items: center; justify-content: center; height: 30px; margin-top: 4px; border: 1px solid #dddbd7; }

.viz { background: #f3f2f1; border-right: 1px solid #e3e1df; }
.viz header { padding: 0 5px; }
.viz h3 { padding-left: 5px; font: 600 8px/9px "Open Sans", sans-serif; }
.modes { display: grid; grid-template-columns: repeat(3, 43px); justify-content: start; margin: 2px 0 7px; padding-left: 5px; }
.modes button { width: 20px; height: 20px; }
.modes svg { width: 17px; height: 17px; }
.modes .on { background: #d3d2d0; }
.gallery { display: grid; grid-template-columns: repeat(6, minmax(0, 1fr)); grid-auto-rows: 18px; padding: 6px 2px 6px 4px; border-top: 1px solid #b9b7b5; }
.gallery svg { width: 13px; height: 13px; }
.g { fill: none; stroke: #5d5c5b; }
.s { fill: #fafafa; stroke: #5d5c5b; }
.b { fill: #5daae8; stroke: #2b78b8; }
.num { font: 700 6px Roboto, sans-serif; fill: #2f86ca; }
.gallery .sel { outline: 1px solid #555; outline-offset: -1px; }
.gallery .code { font: 700 11px "Open Sans", sans-serif; color: #2b7fc2; }
.gallery .more { font-size: 13px; }
.viz h4 { padding: 4px 8px; line-height: 12px; }
.well { margin: 0 2px 0 3px; padding: 1px 2px 5px; background: #fff; }
.pill { display: flex; align-items: center; gap: 3px; height: 15px; border: 1px solid #c8c6c4; background: #eae9e7; padding: 0 4px 0 1px; }
.pill svg { width: 8px; height: 8px; }
.pill svg:nth-of-type(1) { margin-left: auto; }
.viz .drill { padding-top: 8px; padding-bottom: 0; font: 600 8px/12px Lato, sans-serif; }
.toggle { display: flex; align-items: center; position: relative; height: 18px; padding: 0 14px 0 8px; }
.toggle input { appearance: none; width: 21px; height: 11px; margin-left: auto; border: 1px solid #777; border-radius: 6px; background: #fff radial-gradient(circle at 5px 50%, #555 2px, transparent 3px); }
.toggle input:checked { border-color: #117865; background: #117865 radial-gradient(circle at 15px 50%, #fff 2px, transparent 3px); }
.toggle span { position: absolute; right: 17px; font-size: 6px; pointer-events: none; }
.toggle :checked + span { right: 24px; color: #fff; }
.well-add { margin: 4px 3px 0; background: #fff; line-height: 16px; text-align: center; white-space: nowrap; }

.data header { padding: 0 5px; }
.find2 { display: flex; align-items: center; gap: 4px; height: 15px; margin: 4px 3px 0; padding-left: 7px; background: #fff; border-bottom: 1px solid #777; border-radius: 2px; color: #605e5c; font: 8px "Open Sans", sans-serif; }
.find2 svg { width: 10px; height: 10px; }
.data ul { list-style: none; padding: 6px 0 0 9px; }
.data li { position: relative; display: flex; align-items: center; gap: 3px; line-height: 16px; height: 16px; }
.data li svg { width: 9px; height: 9px; }
.data li .r { width: 7px; height: 7px; margin-right: 1px; transform: rotate(-90deg); }
.used::after { content: "✓"; position: absolute; left: 15px; top: 7px; width: 8px; height: 8px; border-radius: 50%; background: #117865; color: #fff; font: 700 6px/8px "DejaVu Sans", sans-serif; text-align: center; }

/* status bar */
.status { display: flex; align-items: center; justify-content: space-between; height: 15px; padding: 0 12px 0 3px; border-bottom: 1px solid #555; color: #555; }
.zoom { display: flex; align-items: center; gap: 5px; }
.zoom input { appearance: none; width: 65px; height: 1px; background: #999; }
.zoom input::-webkit-slider-thumb { appearance: none; width: 3px; height: 8px; background: #555; }
.zoom output { margin: 0 7px 0 3px; }
.zoom svg { width: 11px; height: 9px; }

/* taskbar */
.taskbar { display: flex; align-items: center; height: 31px; background: linear-gradient(90deg, #d8e0f0, #d3dbe9 15%, #dbe6e0 24%, #e4dfd8 33%, #f0d3d7 40%, #efd3d8 50%, #e2d8e0 60%, #dae2ec 71%, #e8ebf0 78%, #efefef 85%); }
.weather { display: flex; align-items: center; gap: 2px; flex: 186; padding-left: 12px; white-space: nowrap; }
.weather > svg { width: 20px; height: 20px; }
.weather div, .clock { display: flex; flex-direction: column; }
.badge { font: 700 8px Roboto, sans-serif; fill: #fff; text-anchor: middle; }
.apps { display: flex; align-items: center; }
.apps > button { position: relative; width: 28px; height: 26px; margin-right: 1px; }
.apps > button > svg { width: 17px; height: 17px; }
.run::after { content: ""; position: absolute; bottom: 0; width: 4px; height: 2px; border-radius: 1px; background: #888; }
.apps .act { width: 26px; background: #f5f6f8; border-radius: 3px; }
.act::after { width: 10px; background: #1d72c8; }
.task-search { display: flex; align-items: center; gap: 7px; width: 140px; height: 20px; margin: 0 3px 0 2px; padding: 0 2px 0 7px; background: #f3f6f5; border-radius: 10px; font: 9px "Open Sans", sans-serif; }
.task-search input { flex: 1; }
.task-search > svg { width: 10px; height: 10px; }
.task-search .swan { width: 32px; height: 18px; }
.tray { display: flex; align-items: center; justify-content: flex-end; gap: 5px; flex: 240; padding-right: 12px; white-space: nowrap; }
.tray svg:nth-child(-n+2) { margin-right: 4px; }
.tray .lang { margin: 0 5px 0 6px; }
.clock { text-align: right; margin-left: 6px; }
```
